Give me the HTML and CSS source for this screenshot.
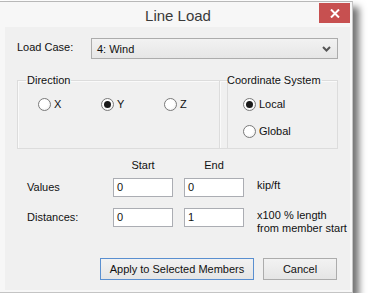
FILE: index.html
```html
<!DOCTYPE html>
<html lang="en">
<head>
    <meta charset="UTF-8">
    <title>Line Load</title>
    <link rel="stylesheet" href="styles.css">
</head>
<body>
    <div class="window">
        <div class="titlebar">
            <span class="title">Line Load</span>
            <div class="close">
                <svg width="10" height="9" viewBox="0 0 10 9"><path d="M1 0.5 L9 8.5 M9 0.5 L1 8.5" stroke="#fff" stroke-width="2"/></svg>
            </div>
        </div>

        <div class="client">
            <div class="load-case">
                <span class="label">Load Case:</span>
                <div class="select">
                    <span>4: Wind</span>
                    <svg width="9" height="6" viewBox="0 0 9 6"><path d="M1 1 L4.5 4.5 L8 1" stroke="#555" stroke-width="2" fill="none"/></svg>
                </div>
            </div>

            <div class="groups">
                <fieldset class="group">
                    <legend>Direction</legend>
                    <div class="radio-row">
                        <div class="radio"><span class="dot"></span>X</div>
                        <div class="radio"><span class="dot checked"></span>Y</div>
                        <div class="radio"><span class="dot"></span>Z</div>
                    </div>
                </fieldset>
                <fieldset class="group coords">
                    <legend>Coordinate System</legend>
                    <div class="radio-col">
                        <div class="radio"><span class="dot checked"></span>Local</div>
                        <div class="radio"><span class="dot"></span>Global</div>
                    </div>
                </fieldset>
            </div>

            <div class="values">
                <span></span>
                <span class="head">Start</span>
                <span class="head">End</span>
                <span></span>

                <span class="label">Values</span>
                <div class="field">0</div>
                <div class="field">0</div>
                <span class="unit">kip/ft</span>

                <span class="label">Distances:</span>
                <div class="field">0</div>
                <div class="field">1</div>
                <span class="unit">x100 % length<br>from member start</span>
            </div>

            <div class="buttons">
                <div class="button default">Apply to Selected Members</div>
                <div class="button cancel">Cancel</div>
            </div>
        </div>
    </div>
</body>
</html>
```

FILE: styles.css
```css
* {
    margin: 0;
    padding: 0;
    box-sizing: border-box;
}

body {
    background: #ffffff;
    font-family: 'Liberation Sans', Arial, sans-serif;
    font-size: 11px;
    color: #111;
}

.window {
    width: 353px;
    height: 292px;
    margin-top: 1px;
    background: #f7f7f7;
    border-top: 1px solid #b8b8b8;
    border-right: 1px solid #c4c4c4;
    border-bottom: 1px solid #c4c4c4;
    box-shadow: 6px 6px 7px rgba(0, 0, 0, 0.55);
    padding: 0 2px 1px 5px;
}

.titlebar {
    height: 25px;
    display: flex;
    align-items: center;
    justify-content: center;
    position: relative;
}

.title {
    font-size: 15px;
    color: #3a3a3a;
    margin-top: 2px;
    margin-left: 1px;
}

.close {
    position: absolute;
    right: 0;
    top: 1px;
    width: 31px;
    height: 20px;
    background: #c75050;
    display: flex;
    align-items: center;
    justify-content: center;
}

.client {
    width: 345px;
    height: 263px;
    background: #f0f0f0;
    padding-top: 11px;
}

.load-case {
    display: flex;
    align-items: center;
    padding-left: 12px;
}

.load-case .label {
    width: 74px;
    margin-top: -3px;
}

.select {
    width: 247px;
    height: 21px;
    border: 1px solid #acacac;
    background: linear-gradient(#f2f2f2, #e6e6e6);
    display: flex;
    align-items: center;
    justify-content: space-between;
    padding: 0 6px 0 5px;
}

.groups {
    display: grid;
    grid-template-columns: 201px 119px;
    column-gap: 1px;
    height: 76px;
    margin: 14px 0 0 12px;
}

.group {
    border: 1px solid #dcdcdc;
    box-shadow: inset 1px 1px 0 #fafafa;
    padding: 9px 0 0 0;
}

.group legend {
    line-height: 15px;
    padding: 0 1px;
    margin-left: 8px;
}

.coords legend {
    margin-left: 6px;
}

.radio-row {
    display: flex;
    padding-left: 20px;
}

.radio-row .radio {
    width: 63px;
}

.radio-col {
    display: flex;
    flex-direction: column;
    gap: 12px;
    padding-left: 23px;
}

.radio {
    display: flex;
    align-items: center;
    gap: 3px;
    line-height: 15px;
}

.dot {
    width: 13px;
    height: 13px;
    border-radius: 50%;
    border: 1px solid #7a7a7a;
    background: radial-gradient(circle at 40% 40%, #ffffff 45%, #e6e6e6);
    display: flex;
    align-items: center;
    justify-content: center;
}

.dot.checked::after {
    content: "";
    width: 7px;
    height: 7px;
    border-radius: 50%;
    background: #1a1a1a;
}

.values {
    display: grid;
    grid-template-columns: 75px 60px 60px auto;
    grid-template-rows: 20px 30px 19px;
    column-gap: 11px;
    margin: 9px 0 0 22px;
}

.values > * {
    align-self: start;
}

.values .head {
    text-align: center;
    line-height: 15px;
}

.values .label {
    line-height: 19px;
}

.field {
    height: 19px;
    background: #ffffff;
    border: 1px solid #abadb3;
    padding: 0 3px;
    line-height: 17px;
}

.unit {
    line-height: 13px;
    padding-top: 1px;
    margin-left: 2px;
}

.buttons {
    display: flex;
    justify-content: flex-end;
    gap: 9px;
    padding-right: 13px;
    margin-top: 31px;
}

.button {
    height: 22px;
    border: 1px solid #acacac;
    background: linear-gradient(#f2f2f2, #e5e5e5);
    display: flex;
    align-items: center;
    justify-content: center;
}

.button.default {
    width: 154px;
    border-color: #5a8fd0;
}

.button.cancel {
    width: 74px;
}
```
